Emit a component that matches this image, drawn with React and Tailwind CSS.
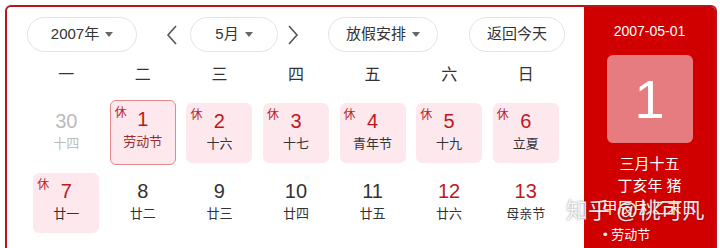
import React from "react";

const font = { fontFamily: '"Liberation Sans", "Noto Sans CJK SC", sans-serif' };

const weekdays = ["一", "二", "三", "四", "五", "六", "日"];

const days = [
  { n: "30", lunar: "十四", muted: true },
  { n: "1", lunar: "劳动节", rest: true, selected: true, red: true, fest: true },
  { n: "2", lunar: "十六", rest: true, red: true },
  { n: "3", lunar: "十七", rest: true, red: true },
  { n: "4", lunar: "青年节", rest: true, red: true },
  { n: "5", lunar: "十九", rest: true, red: true },
  { n: "6", lunar: "立夏", rest: true, red: true },
  { n: "7", lunar: "廿一", rest: true, red: true },
  { n: "8", lunar: "廿二" },
  { n: "9", lunar: "廿三" },
  { n: "10", lunar: "廿四" },
  { n: "11", lunar: "廿五" },
  { n: "12", lunar: "廿六", red: true },
  { n: "13", lunar: "母亲节", red: true },
];

const Caret = () => (
  <span className="ml-[6px] inline-block w-0 h-0 border-l-[4px] border-r-[4px] border-t-[5px] border-l-transparent border-r-transparent border-t-[#666]" />
);

const Pill = ({ w, children }) => (
  <div
    className={`${w} h-[35px] rounded-full border border-[#e3e3e3] flex items-center justify-center text-[15px] text-[#333]`}
  >
    {children}
  </div>
);

const Chevron = ({ dir }) => (
  <svg width="14" height="22" viewBox="0 0 14 22" className="text-[#555]">
    <path
      d={dir === "left" ? "M11 2 L3 11 L11 20" : "M3 2 L11 11 L3 20"}
      fill="none"
      stroke="currentColor"
      strokeWidth="1.6"
    />
  </svg>
);

const DayCell = ({ d }) => {
  let box = "w-[66px] h-[60px] rounded-md relative";
  if (d.rest) box += " bg-[#fde9ed]";
  if (d.selected) box = "w-[66px] h-[65px] rounded-md relative bg-[#fde9ed] border-[1.5px] border-[#e3878b]";
  const numColor = d.muted ? "text-[#bbb]" : d.red ? "text-[#c3161c]" : "text-[#333]";
  const lunarColor = d.muted ? "text-[#bbb]" : d.fest && d.selected ? "text-[#9c2b2b]" : "text-[#333]";
  return (
    <div className="flex items-center justify-center h-[65px]">
      <div className={box}>
        {d.rest && (
          <span className="absolute left-[4px] top-[6px] text-[12px] leading-none text-[#b8232a]">休</span>
        )}
        <div className="flex flex-col items-center pt-[6px]">
          <span className={`text-[20px] leading-[24px] ${numColor}`}>{d.n}</span>
          <span className={`text-[13px] leading-[22px] ${lunarColor}`}>{d.lunar}</span>
        </div>
      </div>
    </div>
  );
};

export default function App() {
  return (
    <div className="w-[720px] h-[248px] bg-white overflow-hidden relative" style={font}>
      <div className="absolute left-[5px] top-[5px] w-[712px] h-[270px] border-2 border-[#b5161c] rounded-md flex overflow-hidden">
        {/* left calendar */}
        <div className="w-[577px] pl-[20px] pt-[10px]">
          <div className="flex items-center h-[35px]">
            <Pill w="w-[110px]">
              2007年<Caret />
            </Pill>
            <div className="ml-[28px] mr-[11px]">
              <Chevron dir="left" />
            </div>
            <Pill w="w-[88px]">
              5月<Caret />
            </Pill>
            <div className="ml-[8px] mr-[28px]">
              <Chevron dir="right" />
            </div>
            <Pill w="w-[110px]">
              放假安排<Caret />
            </Pill>
            <div className="ml-[31px]">
              <Pill w="w-[96px]">返回今天</Pill>
            </div>
          </div>
          <div className="grid grid-cols-7 w-[536px] ml-[1px] mt-[6px] h-[34px] items-center">
            {weekdays.map((w) => (
              <div key={w} className="text-center text-[16px] text-[#333]">
                {w}
              </div>
            ))}
          </div>
          <div className="grid grid-cols-7 w-[536px] ml-[1px] mt-[8px] gap-y-[5px]">
            {days.map((d) => (
              <DayCell key={d.n} d={d} />
            ))}
          </div>
        </div>
        {/* right panel */}
        <div className="flex-1 bg-[#d10000] flex flex-col items-center text-white">
          <div className="mt-[14px] text-[14px] leading-[20px]">2007-05-01</div>
          <div className="mt-[14px] w-[86px] h-[88px] rounded-md bg-[#e67c80] flex items-center justify-center">
            <span className="text-[54px] leading-none">1</span>
          </div>
          <div className="mt-[10px] text-[15px] leading-[22px] text-center">
            <div>三月十五</div>
            <div>丁亥年 猪</div>
            <div>甲辰月 乙未日</div>
          </div>
          <div className="mt-[7px] text-[13px] leading-[18px] self-start ml-[19px]">• 劳动节</div>
        </div>
      </div>
      {/* watermark */}
      <div className="absolute left-[566px] top-[197px] text-[22px] leading-[28px] text-white/90 [text-shadow:0_0_2px_rgba(0,0,0,0.5)]">
        知乎 @桃可凡
      </div>
    </div>
  );
}
